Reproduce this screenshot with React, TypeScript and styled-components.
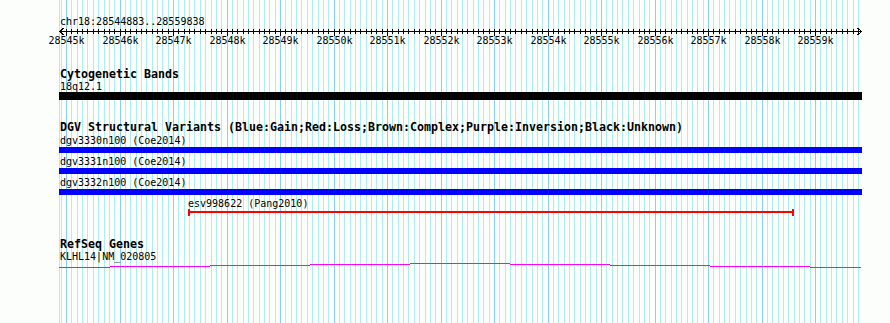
import React from 'react';
import styled, { createGlobalStyle } from 'styled-components';

const REF = 'chr18';
const START = 28544883;
const END = 28559838;
const X0 = 59.8;
const BP_PX = 0.0535;
const PANEL_LEFT = 59;
const PANEL_RIGHT = 862;
const WIDTH = 890;
const HEIGHT = 323;

const MINOR = '#afeeee';
const MAJOR = '#87cefa';

const toX = (pos: number) => X0 + (pos - START) * BP_PX;
const col = (pos: number) => Math.round(toX(pos));

type Feature = {
  name: string;
  start: number;
  end: number;
  color: string;
  kind: 'bar' | 'span';
};

const dgvFeatures: Feature[] = [
  { name: 'dgv3330n100 (Coe2014)', start: 28540000, end: 28570000, color: '#0000ff', kind: 'bar' },
  { name: 'dgv3331n100 (Coe2014)', start: 28540000, end: 28570000, color: '#0000ff', kind: 'bar' },
  { name: 'dgv3332n100 (Coe2014)', start: 28540000, end: 28570000, color: '#0000ff', kind: 'bar' },
  { name: 'esv998622 (Pang2010)', start: 28547280, end: 28558605, color: '#ff0000', kind: 'span' },
];

// intron hat of KLHL14, drawn as stepped 1px segments
const geneSteps = [
  [59, 110, 267],
  [110, 210, 266],
  [210, 310, 265],
  [310, 410, 264],
  [410, 510, 263],
  [510, 610, 264],
  [610, 710, 265],
  [710, 810, 266],
  [810, 861, 267],
];

const GlobalStyle = createGlobalStyle`
  html, body {
    margin: 0;
    padding: 0;
    background: #fcfefc;
  }
  body {
    font-family: "DejaVu Sans Mono", "Liberation Mono", monospace;
    color: #000;
  }
`;

function clip(f: Feature) {
  const left = Math.max(PANEL_LEFT, col(f.start));
  const right = Math.min(PANEL_RIGHT, col(f.end));
  return { left, width: right - left };
}

function GridLines() {
  const lines = [<rect key="edge" x={59} y={0} width={1} height={HEIGHT} fill={MINOR} />];
  for (let p = 28544900; p <= END; p += 100) {
    lines.push(
      <rect key={p} x={col(p)} y={0} width={1} height={HEIGHT} fill={p % 1000 === 0 ? MAJOR : MINOR} />
    );
  }
  return (
    <GridLayer width={WIDTH} height={HEIGHT}>
      {lines}
    </GridLayer>
  );
}

function Ruler() {
  const ticks = [];
  const labels = [];
  for (let p = 28544900; p <= END; p += 100) {
    const major = p % 1000 === 0;
    const x = col(p);
    ticks.push(<rect key={p} x={x} y={29} width={1} height={major ? 7 : 5} fill="#000" />);
    if (major) {
      labels.push(
        <RulerText key={p} x={x + 0.5} y={43.5} textAnchor="middle">
          {`${p / 1000}k`}
        </RulerText>
      );
    }
  }
  return (
    <RulerSvg width={WIDTH} height={20} viewBox={`0 27 ${WIDTH} 20`}>
      <rect x={59} y={31} width={803} height={1} fill="#000" />
      <polyline points="63.5,28 59.5,31.5 63.5,35" fill="none" stroke="#000" strokeWidth={1} />
      <polyline points="857.5,28 861.5,31.5 857.5,35" fill="none" stroke="#000" strokeWidth={1} />
      {ticks}
      {labels}
    </RulerSvg>
  );
}

function FeatureRow({ feature, first }: { feature: Feature; first: boolean }) {
  const { left, width } = clip(feature);
  const indent = left - PANEL_LEFT;
  return (
    <Row>
      <FeatureLabel $gap={first ? 1 : 3} style={{ marginLeft: indent + (feature.kind === 'bar' ? 1 : 0) }}>
        {feature.name}
      </FeatureLabel>
      {feature.kind === 'bar' ? (
        <Bar $color={feature.color} $height={6} $gap={1} style={{ marginLeft: indent, width }} />
      ) : (
        <Span $color={feature.color} style={{ marginLeft: indent, width }} />
      )}
    </Row>
  );
}

export default function App() {
  return (
    <>
      <GlobalStyle />
      <Canvas>
        <GridLines />
        <Tracks>
          <PositionLabel>{`${REF}:${START}..${END}`}</PositionLabel>
          <Ruler />

          <TrackTitle $gap={21}>Cytogenetic Bands</TrackTitle>
          <FeatureLabel $gap={0} style={{ marginLeft: 1 }}>18q12.1</FeatureLabel>
          <Bar $color="#000" $height={8} $gap={0} style={{ width: PANEL_RIGHT - PANEL_LEFT }} />

          <TrackTitle $gap={21}>
            DGV Structural Variants (Blue:Gain;Red:Loss;Brown:Complex;Purple:Inversion;Black:Unknown)
          </TrackTitle>
          {dgvFeatures.map((f, i) => (
            <FeatureRow key={f.name} feature={f} first={i === 0} />
          ))}

          <TrackTitle $gap={22}>RefSeq Genes</TrackTitle>
          <FeatureLabel $gap={0} style={{ marginLeft: 1 }}>KLHL14|NM_020805</FeatureLabel>
          <GeneSvg width={831} height={8} viewBox="59 262 831 8">
            {geneSteps.map(([x1, x2, y]) => (
              <rect key={x1} x={x1} y={y} width={x2 - x1} height={1} fill="#ff00ff" />
            ))}
          </GeneSvg>
        </Tracks>
      </Canvas>
    </>
  );
}

const Canvas = styled.div`
  position: relative;
  width: ${WIDTH}px;
  height: ${HEIGHT}px;
  overflow: hidden;
  background: #fcfefc;
`;

const GridLayer = styled.svg`
  position: absolute;
  top: 0;
  left: 0;
  display: block;
  shape-rendering: crispEdges;
`;

const Tracks = styled.div`
  position: relative;
  display: flex;
  flex-direction: column;
  align-items: flex-start;
  padding-left: ${PANEL_LEFT}px;
`;

const PositionLabel = styled.div`
  margin-top: 16px;
  padding-left: 1px;
  font-size: 10px;
  line-height: 11px;
  height: 11px;
  white-space: pre;
`;

const RulerSvg = styled.svg`
  display: block;
  margin-left: -${PANEL_LEFT}px;
  shape-rendering: crispEdges;
`;

const RulerText = styled.text`
  font-family: "DejaVu Sans Mono", "Liberation Mono", monospace;
  font-size: 10px;
  fill: #000;
`;

const TrackTitle = styled.div<{ $gap: number }>`
  margin-top: ${({ $gap }) => $gap}px;
  padding-left: 1px;
  font-size: 11.63px;
  font-weight: bold;
  line-height: 13px;
  height: 13px;
  white-space: pre;
`;

const Row = styled.div`
  display: flex;
  flex-direction: column;
  align-items: flex-start;
`;

const FeatureLabel = styled.div<{ $gap: number }>`
  margin-top: ${({ $gap }) => $gap}px;
  font-size: 10px;
  line-height: 11px;
  height: 11px;
  white-space: pre;
`;

const Bar = styled.div<{ $color: string; $height: number; $gap: number }>`
  margin-top: ${({ $gap }) => $gap}px;
  height: ${({ $height }) => $height}px;
  background: ${({ $color }) => $color};
`;

const Span = styled.div<{ $color: string }>`
  box-sizing: border-box;
  height: 7px;
  border-left: 2px solid ${({ $color }) => $color};
  border-right: 2px solid ${({ $color }) => $color};
  background: linear-gradient(${({ $color }) => $color}, ${({ $color }) => $color}) 0 2px / 100% 2px no-repeat;
`;

const GeneSvg = styled.svg`
  display: block;
  shape-rendering: crispEdges;
`;
